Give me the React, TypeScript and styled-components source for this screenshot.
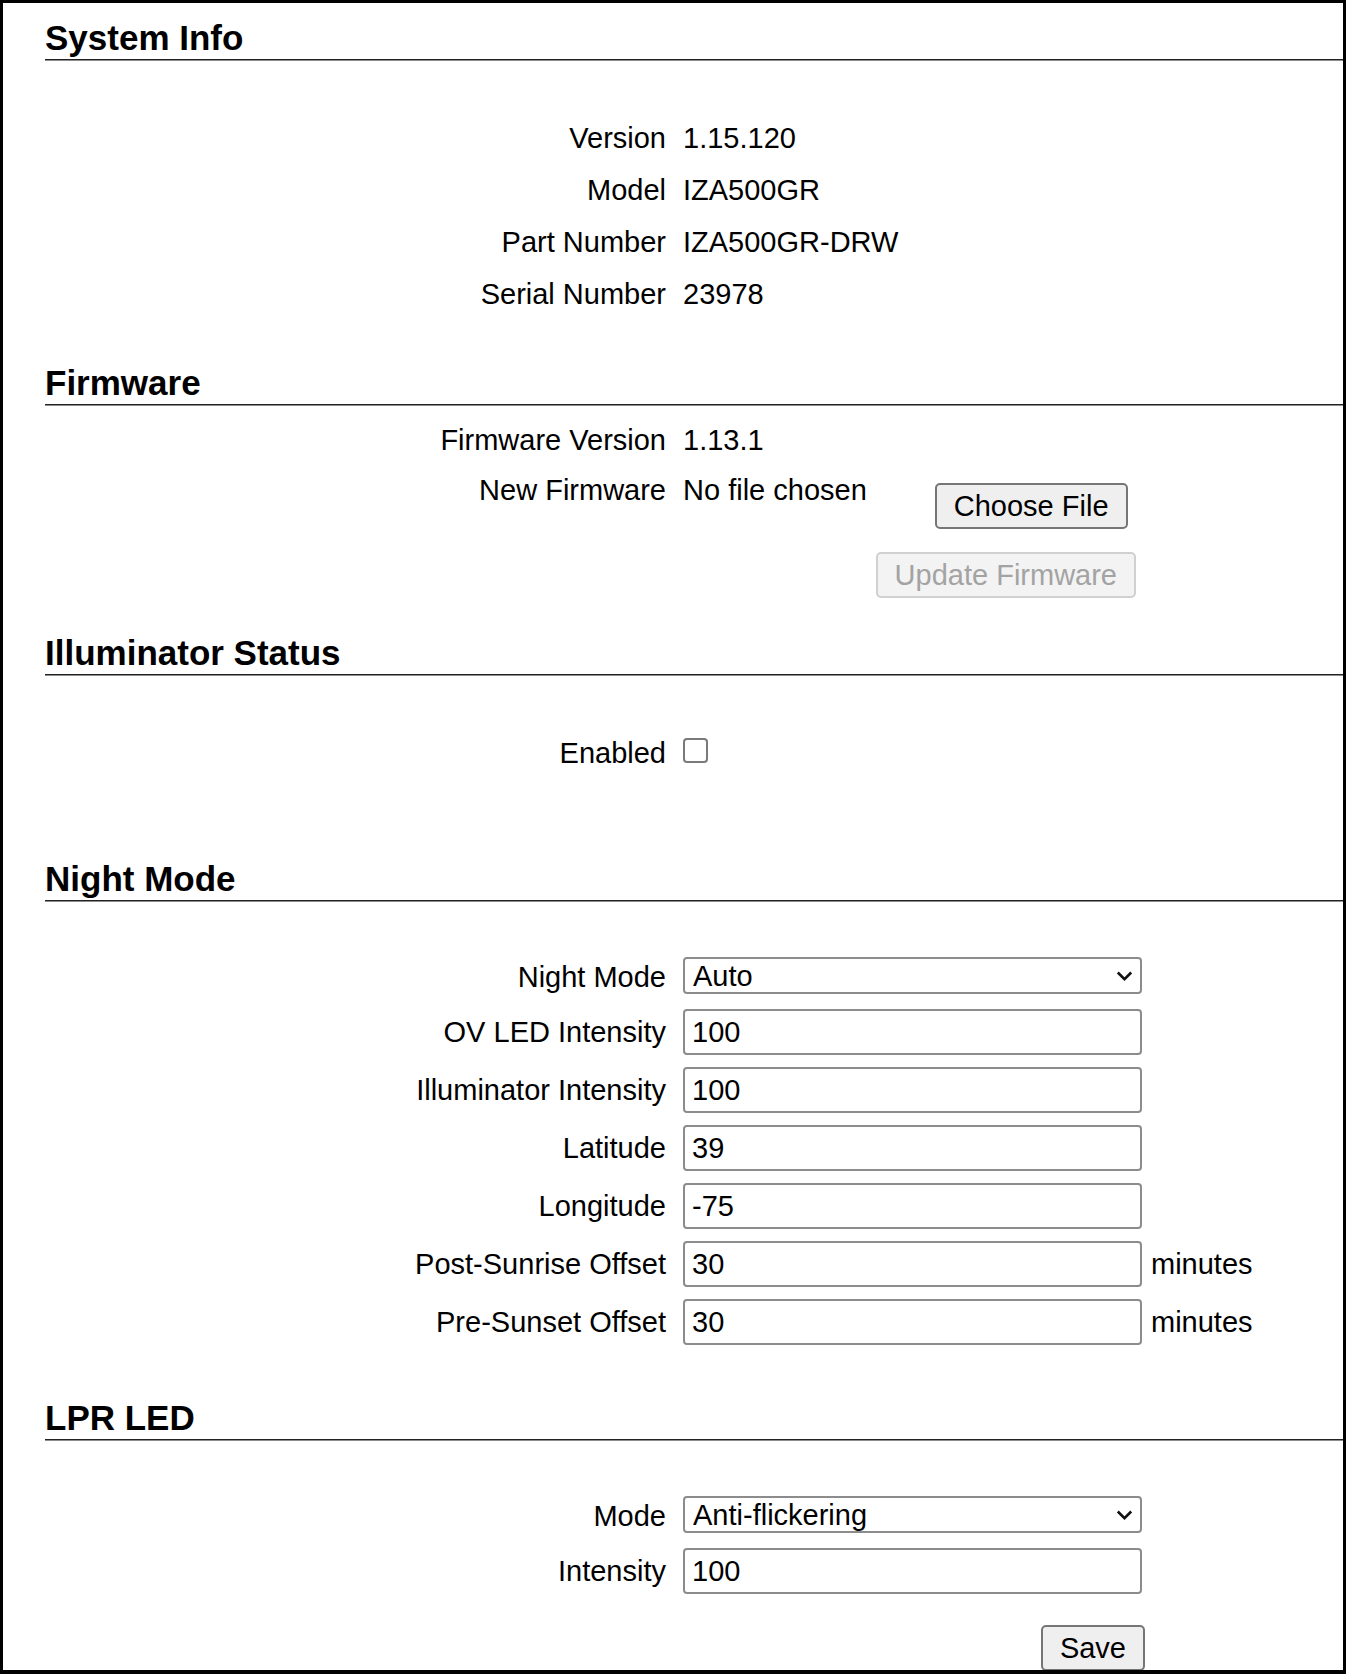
import { FC, ReactNode } from "react";
import styled, { createGlobalStyle } from "styled-components";

const GlobalStyle = createGlobalStyle`
  html, body {
    margin: 0;
    padding: 0;
    background: #fff;
  }

  body {
    font-family: "Liberation Sans", Arial, sans-serif;
    color: #000;
  }
`;

const Frame = styled.div`
  box-sizing: border-box;
  width: 1346px;
  height: 1674px;
  border: 3px solid #000;
  border-bottom-width: 4px;
  padding-left: 42px;
  overflow: hidden;
  font-size: 29px;
  line-height: normal;
`;

const Heading = styled.h2<{ $gap: number }>`
  margin: ${(p) => p.$gap}px 0 0;
  padding-bottom: 2px;
  font-size: 35px;
  font-weight: 700;
  line-height: 39px;
  border-bottom: 1px solid #222;
  box-shadow: 0 1px 0 #8c8c8c;
`;

const Table = styled.div<{ $lead: number }>`
  padding-top: ${(p) => p.$lead}px;
`;

const Row = styled.div<{ $align?: "center" | "start"; $pad?: string }>`
  display: grid;
  grid-template-columns: 638px 459px 1fr;
  align-items: ${(p) => p.$align ?? "center"};
  box-sizing: border-box;
  min-height: 52px;
  padding: ${(p) => p.$pad ?? "6px 0"};
`;

const Label = styled.div`
  padding-right: 17px;
  text-align: right;
  white-space: nowrap;
`;

const Value = styled.div`
  display: flex;
  align-items: flex-start;
  white-space: nowrap;
`;

const Suffix = styled.div`
  padding-left: 9px;
`;

const TextInput = styled.input`
  box-sizing: border-box;
  width: 100%;
  height: 46px;
  margin: 0;
  padding: 0 7px;
  border: 2px solid #8c8c8c;
  border-radius: 4px;
  font: inherit;
  color: #000;
  background: #fff;
`;

const SelectWrap = styled.div`
  position: relative;
  align-self: start;
`;

const Select = styled.select`
  box-sizing: border-box;
  width: 100%;
  height: 37px;
  margin: 0;
  padding: 0 30px 0 8px;
  border: 2px solid #8c8c8c;
  border-radius: 4px;
  font: inherit;
  color: #000;
  background: #fff;
  appearance: none;
`;

const Chevron = styled.svg`
  position: absolute;
  right: 9px;
  top: 50%;
  transform: translateY(-50%);
  pointer-events: none;
`;

const Checkbox = styled.input`
  box-sizing: border-box;
  width: 25px;
  height: 25px;
  margin: 0 0 5px;
  border: 2px solid #7a7a7a;
  border-radius: 4px;
  background: #fff;
  appearance: none;
`;

const Button = styled.button<{ $gap?: number }>`
  box-sizing: border-box;
  height: 46px;
  margin: ${(p) => p.$gap ?? 0}px 0 0;
  padding: 0 17px;
  border: 2px solid #767676;
  border-radius: 5px;
  font: inherit;
  color: #000;
  background: #efefef;
  white-space: nowrap;

  &:disabled {
    border-color: #d0d0d0;
    color: #a3a3a3;
    background: #f3f3f3;
  }
`;

const ChooseFile = styled(Button)`
  margin-left: 68px;
`;

const EndCell = styled.div<{ $shift: number }>`
  display: flex;
  justify-content: flex-end;
  margin-right: ${(p) => p.$shift}px;
`;

const Field: FC<{ label: string; children?: ReactNode; suffix?: string }> = ({
  label,
  children,
  suffix,
}) => (
  <Row>
    <Label>{label}</Label>
    {children}
    {suffix && <Suffix>{suffix}</Suffix>}
  </Row>
);

const Dropdown: FC<{ value: string; options: string[] }> = ({ value, options }) => (
  <SelectWrap>
    <Select defaultValue={value}>
      {options.map((o) => (
        <option key={o}>{o}</option>
      ))}
    </Select>
    <Chevron width="17" height="12" viewBox="0 0 17 12">
      <path d="M1.8 2.5 L8.5 9.2 L15.2 2.5" fill="none" stroke="#111" strokeWidth="2.6" />
    </Chevron>
  </SelectWrap>
);

export default function App() {
  return (
    <>
      <GlobalStyle />
      <Frame>
        <Heading $gap={15}>System Info</Heading>
        <Table $lead={52}>
          <Field label="Version">
            <Value>1.15.120</Value>
          </Field>
          <Field label="Model">
            <Value>IZA500GR</Value>
          </Field>
          <Field label="Part Number">
            <Value>IZA500GR-DRW</Value>
          </Field>
          <Field label="Serial Number">
            <Value>23978</Value>
          </Field>
        </Table>

        <Heading $gap={43}>Firmware</Heading>
        <Table $lead={9}>
          <Field label="Firmware Version">
            <Value>1.13.1</Value>
          </Field>
          <Row $align="start" $pad="8px 0 6px">
            <Label>New Firmware</Label>
            <Value>
              <span>No file chosen</span>
              <ChooseFile type="button" $gap={9}>
                Choose File
              </ChooseFile>
            </Value>
          </Row>
          <Row $pad="17px 0 0">
            <span />
            <EndCell $shift={6}>
              <Button type="button" disabled>
                Update Firmware
              </Button>
            </EndCell>
          </Row>
        </Table>

        <Heading $gap={35}>Illuminator Status</Heading>
        <Table $lead={52}>
          <Field label="Enabled">
            <Value>
              <Checkbox type="checkbox" />
            </Value>
          </Field>
        </Table>

        <Heading $gap={80}>Night Mode</Heading>
        <Table $lead={50}>
          <Field label="Night Mode">
            <Dropdown value="Auto" options={["Auto", "Day", "Night"]} />
          </Field>
          <Field label="OV LED Intensity">
            <TextInput defaultValue="100" />
          </Field>
          <Field label="Illuminator Intensity">
            <TextInput defaultValue="100" />
          </Field>
          <Field label="Latitude">
            <TextInput defaultValue="39" />
          </Field>
          <Field label="Longitude">
            <TextInput defaultValue="-75" />
          </Field>
          <Field label="Post-Sunrise Offset" suffix="minutes">
            <TextInput defaultValue="30" />
          </Field>
          <Field label="Pre-Sunset Offset" suffix="minutes">
            <TextInput defaultValue="30" />
          </Field>
        </Table>

        <Heading $gap={47}>LPR LED</Heading>
        <Table $lead={50}>
          <Field label="Mode">
            <Dropdown value="Anti-flickering" options={["Anti-flickering", "Strobe", "Off"]} />
          </Field>
          <Field label="Intensity">
            <TextInput defaultValue="100" />
          </Field>
          <Row $pad="25px 0 0">
            <span />
            <EndCell $shift={-3}>
              <Button type="button">Save</Button>
            </EndCell>
          </Row>
        </Table>
      </Frame>
    </>
  );
}
